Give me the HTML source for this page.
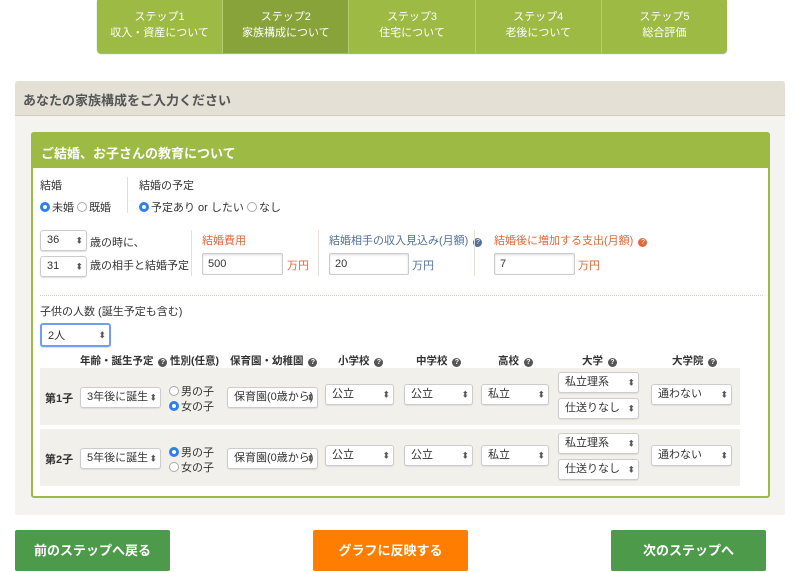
<!DOCTYPE html><html><head><meta charset="utf-8"><style>
*{box-sizing:border-box;margin:0;padding:0}
body{width:800px;height:572px;background:#fff;font-family:"Liberation Sans","Noto Sans CJK JP",sans-serif;font-size:11px;color:#333;position:relative;overflow:hidden}
.a{position:absolute;white-space:nowrap}
.tabs{left:97px;top:0;width:630px;height:53px;background:#9cba44;border-radius:0 0 4px 4px;display:flex;box-shadow:0 1px 1px #8a9}
.tab{flex:1;color:#fff;text-align:center;font-size:11px;line-height:16px;padding-top:9px;border-left:1px solid #b5cd72}
.tab:first-child{border-left:0}
.tab.on{background:#87a33a}
.sel{position:absolute;border:1px solid #ccc;border-radius:3px;background:#fff;font-size:11px;padding-left:6px;color:#333;box-shadow:0 1px 1px #ddd}
.sel:after{content:"⬍";position:absolute;right:3px;top:50%;transform:translateY(-50%);font-size:9px;color:#555}
.inp{position:absolute;border:1px solid #ccc;border-radius:2px;background:#fff;font-size:11px;padding-left:5px;box-shadow:inset 0 1px 2px #ddd}
.r{display:inline-block;width:10px;height:10px;border-radius:50%;border:1px solid #aaa;background:#fff;vertical-align:-1px;margin-right:2px}
.r.on{border:3px solid #2f7ff0}
.q{display:inline-block;width:9px;height:9px;border-radius:50%;background:#555;color:#fff;font-size:7px;line-height:9px;text-align:center;vertical-align:0;margin-left:2px}
.btn{position:absolute;top:530px;width:155px;height:41px;color:#fff;font-weight:bold;font-size:13px;text-align:center;line-height:41px;border-radius:2px}
.h{font-weight:bold;font-size:10.5px}
</style></head><body>
<div class="a tabs">
<div class="tab">ステップ1<br>収入・資産について</div>
<div class="tab on">ステップ2<br>家族構成について</div>
<div class="tab">ステップ3<br>住宅について</div>
<div class="tab">ステップ4<br>老後について</div>
<div class="tab">ステップ5<br>総合評価</div>
</div>
<div class="a" style="left:15px;top:81px;width:770px;height:434px;background:#f4f3ef;border-radius:3px"></div>
<div class="a" style="left:15px;top:81px;width:770px;height:35px;background:#e4e0d6;border-bottom:1px solid #d0ccc0;border-radius:3px 3px 0 0"></div>
<div class="a" style="left:23px;top:90px;font-size:13px;font-weight:bold;color:#555">あなたの家族構成をご入力ください</div>
<div class="a" style="left:31px;top:132px;width:739px;height:366px;background:#fff;border:2px solid #9cba44;border-radius:3px"></div>
<div class="a" style="left:31px;top:132px;width:739px;height:36px;background:#9cba44;border-radius:3px 3px 0 0"></div>
<div class="a" style="left:41px;top:143px;font-size:13px;font-weight:bold;color:#fff">ご結婚、お子さんの教育について</div>

<div class="a" style="left:40px;top:177px">結婚</div>
<div class="a" style="left:40px;top:199px"><span class="r on"></span>未婚 <span class="r"></span>既婚</div>
<div class="a" style="left:127px;top:177px;width:1px;height:36px;background:#ddd"></div>
<div class="a" style="left:139px;top:177px">結婚の予定</div>
<div class="a" style="left:139px;top:199px"><span class="r on"></span>予定あり or したい <span class="r"></span>なし</div>

<div class="sel" style="left:40px;top:230px;width:47px;height:21px;line-height:19px">36</div>
<div class="a" style="left:90px;top:234px">歳の時に、</div>
<div class="sel" style="left:40px;top:256px;width:47px;height:21px;line-height:19px">31</div>
<div class="a" style="left:90px;top:257px">歳の相手と結婚予定</div>
<div class="a" style="left:191px;top:230px;width:1px;height:46px;background:#e5e0d5"></div>
<div class="a" style="left:202px;top:232px;color:#e0673a">結婚費用</div>
<div class="inp" style="left:202px;top:253px;width:81px;height:22px;line-height:20px">500</div>
<div class="a" style="left:287px;top:257px;color:#e0673a">万円</div>
<div class="a" style="left:318px;top:230px;width:1px;height:46px;background:#e5e0d5"></div>
<div class="a" style="left:329px;top:232px;color:#51709a">結婚相手の収入見込み(月額) <span class="q" style="background:#51709a">?</span></div>
<div class="inp" style="left:329px;top:253px;width:80px;height:22px;line-height:20px">20</div>
<div class="a" style="left:412px;top:257px;color:#51709a">万円</div>
<div class="a" style="left:474px;top:230px;width:1px;height:46px;background:#e5e0d5"></div>
<div class="a" style="left:494px;top:232px;color:#e0673a">結婚後に増加する支出(月額) <span class="q" style="background:#e0673a">?</span></div>
<div class="inp" style="left:494px;top:253px;width:81px;height:22px;line-height:20px">7</div>
<div class="a" style="left:578px;top:257px;color:#e0673a">万円</div>

<div class="a" style="left:40px;top:295px;width:723px;border-top:1px dotted #d8d0c0"></div>
<div class="a" style="left:40px;top:303px">子供の人数 (誕生予定も含む)</div>
<div class="sel" style="left:40px;top:323px;width:71px;height:24px;line-height:22px;border:2px solid #6fa0f0">2人</div>

<div class="a h" style="left:80px;top:353px">年齢・誕生予定 <span class="q">?</span></div>
<div class="a h" style="left:170px;top:353px">性別(任意)</div>
<div class="a h" style="left:230px;top:353px">保育園・幼稚園 <span class="q">?</span></div>
<div class="a h" style="left:338px;top:353px">小学校 <span class="q">?</span></div>
<div class="a h" style="left:416px;top:353px">中学校 <span class="q">?</span></div>
<div class="a h" style="left:498px;top:353px">高校 <span class="q">?</span></div>
<div class="a h" style="left:582px;top:353px">大学 <span class="q">?</span></div>
<div class="a h" style="left:672px;top:353px">大学院 <span class="q">?</span></div>

<div class="a" style="left:40px;top:368px;width:700px;height:57px;background:#f1f0eb"></div>
<div class="a" style="left:40px;top:429px;width:700px;height:57px;background:#f1f0eb"></div>

<div class="a h" style="left:45px;top:390px;font-size:11px">第1子</div>
<div class="sel" style="left:80px;top:387px;width:81px;height:21px;line-height:19px">3年後に誕生</div>
<div class="a" style="left:169px;top:383px"><span class="r"></span>男の子</div>
<div class="a" style="left:169px;top:398px"><span class="r on"></span>女の子</div>
<div class="sel" style="left:227px;top:387px;width:91px;height:21px;line-height:19px">保育園(0歳から)</div>
<div class="sel" style="left:325px;top:384px;width:69px;height:21px;line-height:19px">公立</div>
<div class="sel" style="left:404px;top:384px;width:69px;height:21px;line-height:19px">公立</div>
<div class="sel" style="left:481px;top:384px;width:68px;height:21px;line-height:19px">私立</div>
<div class="sel" style="left:558px;top:372px;width:81px;height:21px;line-height:19px">私立理系</div>
<div class="sel" style="left:558px;top:398px;width:81px;height:21px;line-height:19px">仕送りなし</div>
<div class="sel" style="left:651px;top:384px;width:81px;height:21px;line-height:19px">通わない</div>

<div class="a h" style="left:45px;top:451px;font-size:11px">第2子</div>
<div class="sel" style="left:80px;top:448px;width:81px;height:21px;line-height:19px">5年後に誕生</div>
<div class="a" style="left:169px;top:444px"><span class="r on"></span>男の子</div>
<div class="a" style="left:169px;top:459px"><span class="r"></span>女の子</div>
<div class="sel" style="left:227px;top:448px;width:91px;height:21px;line-height:19px">保育園(0歳から)</div>
<div class="sel" style="left:325px;top:445px;width:69px;height:21px;line-height:19px">公立</div>
<div class="sel" style="left:404px;top:445px;width:69px;height:21px;line-height:19px">公立</div>
<div class="sel" style="left:481px;top:445px;width:68px;height:21px;line-height:19px">私立</div>
<div class="sel" style="left:558px;top:433px;width:81px;height:21px;line-height:19px">私立理系</div>
<div class="sel" style="left:558px;top:459px;width:81px;height:21px;line-height:19px">仕送りなし</div>
<div class="sel" style="left:651px;top:445px;width:81px;height:21px;line-height:19px">通わない</div>

<div class="btn" style="left:15px;background:#4c9a4a">前のステップへ戻る</div>
<div class="btn" style="left:313px;background:#ff7d00">グラフに反映する</div>
<div class="btn" style="left:611px;background:#4c9a4a">次のステップへ</div>
</body></html>
